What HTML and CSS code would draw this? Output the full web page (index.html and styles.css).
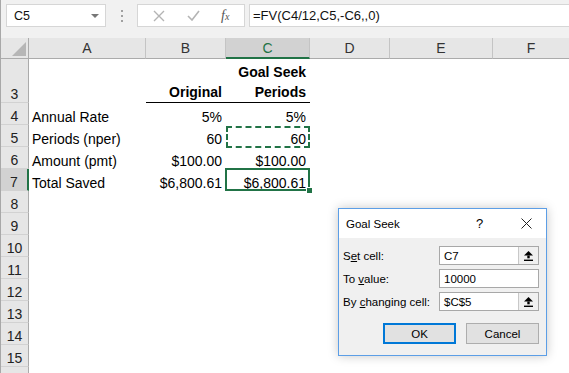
FILE: index.html
```html
<!DOCTYPE html>
<html>
  <head>
    <link rel="stylesheet" href="styles.css">
  </head>
  <body>
    <div class="app">
      <div class="formula-bar">
        <div class="name-box">
          <span>C5</span>
          <span class="caret"></span>
        </div>
        <div class="grip"><span></span><span></span><span></span></div>
        <div class="fx-box">
          <svg class="fx-icon" width="12" height="12" viewBox="0 0 12 12">
            <path d="M1 1 L11 11 M11 1 L1 11" stroke="#b4b4b4" stroke-width="1.4" fill="none" />
          </svg>
          <svg class="fx-icon" width="13" height="11" viewBox="0 0 13 11">
            <path d="M1 6 L5 10 L12 1" stroke="#b4b4b4" stroke-width="1.6" fill="none" />
          </svg>
          <span class="fx">f<sub>x</sub></span>
        </div>
        <div class="formula-input">=FV(C4/12,C5,-C6,,0)</div>
      </div>

      <div class="sheet">
        <div class="corner">
          <svg width="14" height="14" viewBox="0 0 14 14">
            <polygon points="14,0 14,14 0,14" fill="#b6b6b6" />
          </svg>
        </div>
        <div class="col-head">A</div>
        <div class="col-head">B</div>
        <div class="col-head active">C</div>
        <div class="col-head">D</div>
        <div class="col-head">E</div>
        <div class="col-head last">F</div>

        <div class="row-head">3</div>
        <div class="cell"></div>
        <div class="cell bold right title-cell">Original</div>
        <div class="cell bold right title-cell">Goal Seek<br />Periods</div>
        <div class="cell fill"></div>

        <div class="row-head">4</div>
        <div class="cell">Annual Rate</div>
        <div class="cell right">5%</div>
        <div class="cell right">5%</div>
        <div class="cell fill"></div>

        <div class="row-head">5</div>
        <div class="cell">Periods (nper)</div>
        <div class="cell right">60</div>
        <div class="cell right marching">60</div>
        <div class="cell fill"></div>

        <div class="row-head">6</div>
        <div class="cell">Amount (pmt)</div>
        <div class="cell right">$100.00</div>
        <div class="cell right">$100.00</div>
        <div class="cell fill"></div>

        <div class="row-head active">7</div>
        <div class="cell">Total Saved</div>
        <div class="cell right">$6,800.61</div>
        <div class="cell right selected">$6,800.61</div>
        <div class="cell fill"></div>

        <div class="row-head">8</div>
        <div class="cell blank"></div>
        <div class="row-head">9</div>
        <div class="cell blank"></div>
        <div class="row-head">10</div>
        <div class="cell blank"></div>
        <div class="row-head">11</div>
        <div class="cell blank"></div>
        <div class="row-head">12</div>
        <div class="cell blank"></div>
        <div class="row-head">13</div>
        <div class="cell blank"></div>
        <div class="row-head">14</div>
        <div class="cell blank"></div>
        <div class="row-head">15</div>
        <div class="cell blank"></div>
        <div class="row-head">16</div>
        <div class="cell blank"></div>
      </div>
    </div>

    <div class="dialog">
      <div class="dialog-title">
        <span class="dialog-name">Goal Seek</span>
        <span class="help">?</span>
        <svg class="close" width="11" height="11" viewBox="0 0 11 11">
          <path d="M0.5 0.5 L10.5 10.5 M10.5 0.5 L0.5 10.5" stroke="#222" stroke-width="1" fill="none" />
        </svg>
      </div>
      <div class="dialog-body">
        <div class="field">
          <label>S<u>e</u>t cell:</label>
          <div class="input ref">
            <span class="value">C7</span>
            <span class="ref-btn">
              <svg width="9" height="10" viewBox="0 0 9 10">
                <polygon points="4.5,0 0,4.5 9,4.5" fill="#000" />
                <rect x="3.3" y="4.5" width="2.4" height="2.8" fill="#000" />
                <rect x="0" y="8.6" width="9" height="1.4" fill="#000" />
              </svg>
            </span>
          </div>
        </div>
        <div class="field">
          <label>To <u>v</u>alue:</label>
          <div class="input"><span class="value">10000</span></div>
        </div>
        <div class="field">
          <label>By <u>c</u>hanging cell:</label>
          <div class="input ref">
            <span class="value">$C$5</span>
            <span class="ref-btn">
              <svg width="9" height="10" viewBox="0 0 9 10">
                <polygon points="4.5,0 0,4.5 9,4.5" fill="#000" />
                <rect x="3.3" y="4.5" width="2.4" height="2.8" fill="#000" />
                <rect x="0" y="8.6" width="9" height="1.4" fill="#000" />
              </svg>
            </span>
          </div>
        </div>
        <div class="buttons">
          <div class="btn default">OK</div>
          <div class="btn">Cancel</div>
        </div>
      </div>
    </div>
  </body>
</html>
```

FILE: styles.css
```css
body {
  margin: 0;
  height: 373px;
  overflow: hidden;
  background: white;
  font-family: "Liberation Sans", Arial, sans-serif;
}

.app {
  border-left: 1px solid #a8a8a8;
  height: 373px;
  overflow: hidden;
}

/* formula bar */

.formula-bar {
  display: flex;
  align-items: flex-start;
  height: 38px;
  padding-top: 4px;
  box-sizing: border-box;
  background: #f1f1f1;
}

.name-box {
  margin-left: 5px;
  width: 100px;
  height: 23px;
  box-sizing: border-box;
  border: 1px solid #d6d6d6;
  background: white;
  display: flex;
  align-items: center;
  justify-content: space-between;
  padding: 0 6px 0 7px;
  font-size: 12.5px;
  color: #111;
}

.caret {
  width: 0;
  height: 0;
  border-left: 4px solid transparent;
  border-right: 4px solid transparent;
  border-top: 4px solid #777;
}

.grip {
  width: 31px;
  height: 23px;
  display: flex;
  flex-direction: column;
  align-items: center;
  justify-content: center;
  gap: 3px;
}

.grip span {
  width: 2px;
  height: 2px;
  background: #a0a0a0;
}

.fx-box {
  width: 108px;
  height: 23px;
  box-sizing: border-box;
  border: 1px solid #d6d6d6;
  background: white;
  display: flex;
  align-items: center;
  padding-left: 15px;
  gap: 22px;
}

.fx {
  font-family: "Liberation Serif", serif;
  font-style: italic;
  font-size: 14px;
  color: #555;
  margin-left: -1px;
}

.fx sub {
  font-size: 10px;
  vertical-align: 0;
}

.formula-input {
  flex: 1;
  margin-left: 4px;
  height: 23px;
  box-sizing: border-box;
  border: 1px solid #d6d6d6;
  border-right: none;
  background: white;
  padding-left: 3px;
  font-size: 13px;
  line-height: 21px;
  color: #111;
}

/* sheet */

.sheet {
  display: grid;
  grid-template-columns: 28px 117px 80px 84px 80px 103px 1fr;
  grid-template-rows: 21px 44px repeat(13, 22px);
  font-size: 14px;
  color: #000;
}

.corner {
  background: #e6e6e6;
  border-right: 1px solid #ababab;
  border-bottom: 1px solid #ababab;
  display: flex;
  align-items: flex-end;
  justify-content: flex-end;
  padding: 0 2px 2px 0;
}

.col-head {
  background: #e6e6e6;
  border-right: 1px solid #c4c4c4;
  border-bottom: 1px solid #ababab;
  text-align: center;
  line-height: 20px;
  color: #333;
}

.col-head.active {
  background: #d2d2d2;
  border-bottom: 2px solid #217346;
  color: #217346;
}

.col-head.last {
  border-right: none;
}

.row-head {
  background: #e6e6e6;
  border-right: 1px solid #ababab;
  border-bottom: 1px solid #d2d2d2;
  display: flex;
  align-items: flex-end;
  justify-content: center;
  line-height: 16px;
  color: #222;
}

.row-head.active {
  background: #d2d2d2;
  border-right: 2px solid #217346;
}

.cell {
  display: flex;
  align-items: flex-end;
  line-height: 16px;
  padding: 0 3px;
  white-space: nowrap;
  position: relative;
}

.cell.right {
  justify-content: flex-end;
  text-align: right;
  padding-right: 4px;
}

.cell.bold {
  font-weight: bold;
}

.title-cell {
  border-bottom: 1px solid #000;
  line-height: 20px;
}

.cell.fill {
  grid-column: 5 / -1;
}

.cell.blank {
  grid-column: 2 / -1;
}

.marching::after {
  content: "";
  position: absolute;
  inset: 1px 0 -1px 0;
  border: 2px dashed #217346;
}

.selected::after {
  content: "";
  position: absolute;
  inset: -1px 0 0 -1px;
  border: 2px solid #217346;
}

.selected::before {
  content: "";
  position: absolute;
  right: -3px;
  bottom: -3px;
  width: 5px;
  height: 5px;
  background: #217346;
  border: 1px solid white;
  z-index: 1;
}

/* goal seek dialog */

.dialog {
  position: absolute;
  left: 338px;
  top: 208px;
  width: 209px;
  height: 148px;
  box-sizing: border-box;
  border: 1px solid #5c9ee6;
  background: #f0f0f0;
  box-shadow: 0 0 10px rgba(0, 0, 0, 0.22);
  font-size: 11.5px;
  color: #000;
}

.dialog-title {
  height: 29px;
  background: white;
  display: flex;
  align-items: center;
  padding-left: 7px;
}

.dialog-name {
  width: 130px;
}

.help {
  font-size: 13px;
  width: 42px;
}

.close {
  margin-left: 3px;
}

.dialog-body {
  padding: 8px 7px 0 4px;
  display: flex;
  flex-direction: column;
  gap: 4px;
}

.field {
  display: grid;
  grid-template-columns: 96px 100px;
  align-items: center;
  height: 19px;
}

.input {
  height: 19px;
  box-sizing: border-box;
  border: 1px solid #a8a8a8;
  background: white;
  display: flex;
  align-items: center;
}

.value {
  flex: 1;
  padding-left: 4px;
}

.ref-btn {
  width: 20px;
  height: 17px;
  box-sizing: border-box;
  border-left: 1px solid #c8c8c8;
  background: #f0f0f0;
  display: flex;
  align-items: center;
  justify-content: center;
}

.buttons {
  display: flex;
  justify-content: flex-end;
  gap: 10px;
  margin-top: 8px;
}

.btn {
  width: 73px;
  height: 21px;
  box-sizing: border-box;
  border: 1px solid #adadad;
  background: #e1e1e1;
  display: flex;
  align-items: center;
  justify-content: center;
}

.btn.default {
  border: 2px solid #0078d7;
}
```
